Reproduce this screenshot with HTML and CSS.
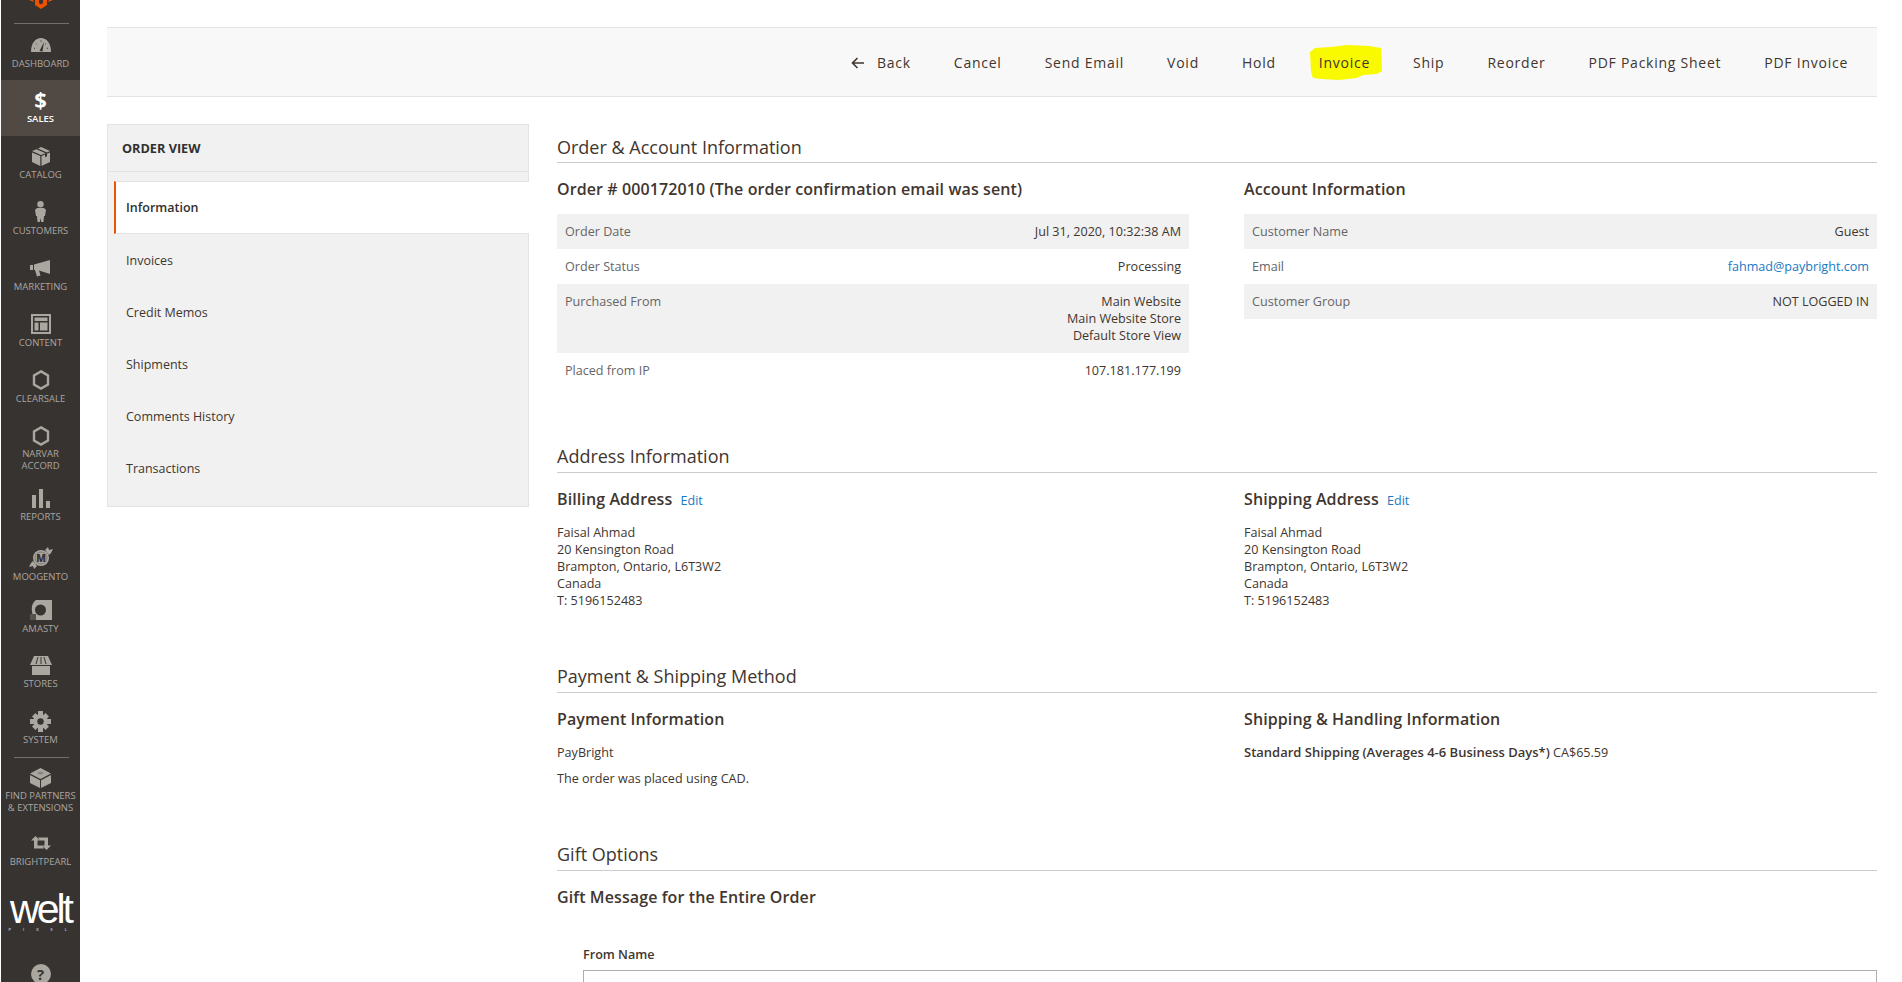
FILE: index.html
```html
<!DOCTYPE html>
<html>
<head>
    <meta name="viewport" content="width=device-width, initial-scale=1.0">
    <title>Order 000172010 / Orders / Sales / Magento Admin</title>
    <link rel="stylesheet" href="styles.css">
</head>
<body>
    <nav class="sidebar">
        <div class="logo">
            <svg width="32" height="10" viewBox="0 0 32 10"><path fill="#eb5202" fill-rule="evenodd" d="M10 0h12v5l-6 4-6-4zM14 0v3l2 1.500L18 3V0zM4 0h4l1 2zM28 0h-4l-1 2z"/></svg>
        </div>
        <a class="nav-item first">
            <span class="nav-icon"><svg width="20" height="14" viewBox="0 0 20 14"><path fill="#aaa6a0" d="M0 14C0 5 4.500 0 10 0s10 5 10 14z"/><path fill="#373330" d="M8.500 13l4.500-9-1.500 9.500z"/><path stroke="#373330" stroke-width="1" d="M3 10l1 .5M5 5.500l.8.8M10 2.500v1.200M15 5.500l-.8.8M17 10l-1 .5"/></svg></span>
            DASHBOARD
        </a>
        <a class="nav-item active">
            <span class="nav-icon dollar">$</span>
            SALES
        </a>
        <a class="nav-item">
            <span class="nav-icon"><svg width="18" height="19" viewBox="0 0 18 19"><path fill="#aaa6a0" d="M9 0l9 4-3 1.500-9-4zM4.500 2.200l9 4L9 8 0 4zM0 5.500l8.300 3.600V19L0 15zM18 5.500V15l-8.500 4V9.100l3.500-1.500v2.600l2-1V6.800z"/></svg></span>
            CATALOG
        </a>
        <a class="nav-item">
            <span class="nav-icon"><svg width="11" height="22" viewBox="0 0 11 22"><circle cx="5.500" cy="3.200" r="3.200" fill="#aaa6a0"/><path fill="#aaa6a0" d="M2 7h7l2 2-1 6H9l-.5 6H6.200l-.7-4-.7 4H2.500L2 15H1L0 9z"/></svg></span>
            CUSTOMERS
        </a>
        <a class="nav-item">
            <span class="nav-icon"><svg width="21" height="17" viewBox="0 0 21 17"><path fill="#aaa6a0" d="M0 5h3v5H0zM4 4.500L20 0v14L9 10.600l1.500 5-3.500 1L5 10H4z"/></svg></span>
            MARKETING
        </a>
        <a class="nav-item">
            <span class="nav-icon"><svg width="20" height="20" viewBox="0 0 20 20"><path fill="#aaa6a0" fill-rule="evenodd" d="M0 0h20v20H0zM2 2v16h16V2z"/><path fill="#aaa6a0" d="M3.500 3.500h13V7h-13zM3.500 8.500h4v8h-4zM9 8.500h7.500v8H9z"/></svg></span>
            CONTENT
        </a>
        <a class="nav-item short">
            <span class="nav-icon"><svg width="18" height="20" viewBox="0 0 18 20"><path fill="none" stroke="#aaa6a0" stroke-width="2.400" d="M9 1.400l7 4v9.200l-7 4-7-4V5.400z"/></svg></span>
            CLEARSALE
        </a>
        <a class="nav-item tall">
            <span class="nav-icon"><svg width="18" height="20" viewBox="0 0 18 20"><path fill="none" stroke="#aaa6a0" stroke-width="2.400" d="M9 1.400l7 4v9.200l-7 4-7-4V5.400z"/></svg></span>
            NARVAR<br>ACCORD
        </a>
        <a class="nav-item reports">
            <span class="nav-icon"><svg width="18" height="19" viewBox="0 0 18 19"><path fill="#aaa6a0" d="M0 6h4v13H0zM7 0h4v19H7zM14 12h4v7h-4z"/></svg></span>
            REPORTS
        </a>
        <a class="nav-item compact">
            <span class="nav-icon"><svg width="24" height="22" viewBox="0 0 24 22"><path fill="#aaa6a0" d="M16 3l3-3 1 3 4-1-2 4-2 2zM8 19l-3 3-1-3-4 1 2-4 2-2z"/><circle cx="12" cy="11" r="8" fill="#aaa6a0"/><circle cx="12" cy="11" r="6" fill="none" stroke="#7d7975" stroke-width="1"/><text class="moo-m" x="12" y="14.500" text-anchor="middle">M</text></svg></span>
            MOOGENTO
        </a>
        <a class="nav-item amasty">
            <span class="nav-icon"><svg width="22" height="21" viewBox="0 0 22 21"><path fill="#aaa6a0" d="M6 0h16v20H6l-3-4C1 9 1 4 6 0z"/><circle cx="10.500" cy="10" r="5.500" fill="#373330"/><path fill="#55524e" d="M0 14h6v6H0z"/></svg></span>
            AMASTY
        </a>
        <a class="nav-item">
            <span class="nav-icon"><svg width="22" height="19" viewBox="0 0 22 19"><path fill="#aaa6a0" d="M4 0h14l4 9H0zM2 10h18v9H2z"/><path stroke="#373330" stroke-width="1" d="M8 1L6 8M11 1v7M14 1l2 7"/></svg></span>
            STORES
        </a>
        <a class="nav-item">
            <span class="nav-icon"><svg width="21" height="21" viewBox="0 0 21 21"><circle cx="10.500" cy="10.500" r="5.200" fill="none" stroke="#aaa6a0" stroke-width="4"/><path fill="#aaa6a0" d="M8 0h5v4H8zM8 17h5v4H8zM0 8h4v5H0zM17 8h4v5h-4zM2 5.500L5.500 2l3 3L5 8.500zM15.500 2L19 5.500l-3 3L12.500 5zM2 15.500L5.500 19l3-3L5 12.500zM19 15.500L15.500 19l-3-3 3.500-3.500z"/></svg></span>
            SYSTEM
        </a>
        <div class="nav-divider"></div>
        <a class="nav-item partners">
            <span class="nav-icon"><svg width="21" height="20" viewBox="0 0 21 20"><path fill="#aaa6a0" d="M10.500 0L21 5.500 10.500 11 0 5.500zM0 7l10 5.200V20L0 15zM21 7l-10 5.200V20l10-5z"/><ellipse cx="10.500" cy="5" rx="3" ry="1.600" fill="#8a8681"/></svg></span>
            FIND PARTNERS<br>&amp; EXTENSIONS
        </a>
        <a class="nav-item compact">
            <span class="nav-icon"><svg width="20" height="14" viewBox="0 0 20 14"><path fill="#aaa6a0" d="M4.500 0L9 4.500H6.500V9.500H11l2 3H3V4.500H0zM15.500 14L11 9.500h2.500V4.500H9l-2-3h10v8h3z"/></svg></span>
            BRIGHTPEARL
        </a>
        <div class="welt">
            <span class="welt-name">welt</span>
            <span class="welt-sub">P I X E L</span>
        </div>
        <div class="help">?</div>
    </nav>

    <div class="content">
        <div class="toolbar">
            <a class="tool-btn back"><svg width="14" height="12" viewBox="0 0 14 12"><path fill="none" stroke="#41362f" stroke-width="1.600" d="M13 6H2M6.500 1L1.500 6l5 5"/></svg>Back</a>
            <a class="tool-btn">Cancel</a>
            <a class="tool-btn">Send Email</a>
            <a class="tool-btn">Void</a>
            <a class="tool-btn">Hold</a>
            <a class="tool-btn">
                <svg class="marker" width="74" height="36" viewBox="0 0 74 36"><path fill="#f9f900" d="M1 7L6 3l16-1 16-2 22 1 12 2 1 23-5 3-14 1-6 3-18 2-18-1-8-1-2-6z"/></svg>
                Invoice
            </a>
            <a class="tool-btn">Ship</a>
            <a class="tool-btn">Reorder</a>
            <a class="tool-btn">PDF Packing Sheet</a>
            <a class="tool-btn">PDF Invoice</a>
        </div>

        <div class="columns">
            <aside class="side-panel">
                <div class="side-title">ORDER VIEW</div>
                <ul class="side-menu">
                    <li class="selected">Information</li>
                    <li>Invoices</li>
                    <li>Credit Memos</li>
                    <li>Shipments</li>
                    <li>Comments History</li>
                    <li>Transactions</li>
                </ul>
            </aside>

            <main class="main">
                <section class="section">
                    <h2>Order &amp; Account Information</h2>
                    <div class="two-col">
                        <div>
                            <h3>Order # 000172010 (The order confirmation email was sent)</h3>
                            <table class="info">
                                <tr><th>Order Date</th><td>Jul 31, 2020, 10:32:38 AM</td></tr>
                                <tr><th>Order Status</th><td>Processing</td></tr>
                                <tr><th>Purchased From</th><td>Main Website<br>Main Website Store<br>Default Store View</td></tr>
                                <tr><th>Placed from IP</th><td>107.181.177.199</td></tr>
                            </table>
                        </div>
                        <div>
                            <h3>Account Information</h3>
                            <table class="info">
                                <tr><th>Customer Name</th><td>Guest</td></tr>
                                <tr><th>Email</th><td><a class="link">fahmad@paybright.com</a></td></tr>
                                <tr><th>Customer Group</th><td>NOT LOGGED IN</td></tr>
                            </table>
                        </div>
                    </div>
                </section>

                <section class="section">
                    <h2>Address Information</h2>
                    <div class="two-col">
                        <div>
                            <h3>Billing Address <a class="link edit">Edit</a></h3>
                            <address>Faisal Ahmad<br>20 Kensington Road<br>Brampton, Ontario, L6T3W2<br>Canada<br>T: 5196152483</address>
                        </div>
                        <div>
                            <h3>Shipping Address <a class="link edit">Edit</a></h3>
                            <address>Faisal Ahmad<br>20 Kensington Road<br>Brampton, Ontario, L6T3W2<br>Canada<br>T: 5196152483</address>
                        </div>
                    </div>
                </section>

                <section class="section">
                    <h2>Payment &amp; Shipping Method</h2>
                    <div class="two-col">
                        <div>
                            <h3>Payment Information</h3>
                            <p class="plain">PayBright</p>
                            <p class="plain">The order was placed using CAD.</p>
                        </div>
                        <div>
                            <h3>Shipping &amp; Handling Information</h3>
                            <p class="plain"><strong>Standard Shipping (Averages 4-6 Business Days*)</strong> CA$65.59</p>
                        </div>
                    </div>
                </section>

                <section class="section">
                    <h2>Gift Options</h2>
                    <h3>Gift Message for the Entire Order</h3>
                    <div class="gift-form">
                        <label class="gift-label">From Name</label>
                        <input class="gift-input" type="text" value="Guest">
                    </div>
                </section>
            </main>
        </div>
    </div>
</body>
</html>
```

FILE: styles.css
```css
html, body {
    height: 100%;
    margin: 0;
    overflow: hidden;
}
body {
    display: flex;
    background-color: white;
    color: #41362f;
    font-family: "Open Sans", "Noto Sans", sans-serif;
    font-size: 12px;
}
a {
    cursor: pointer;
}

/* left menu */
.sidebar {
    flex: none;
    width: 79px;
    margin-left: 1px;
    background-color: #373330;
    color: #aaa6a0;
    font-size: 9.5px;
    text-align: center;
}
.logo {
    height: 24px;
    display: flex;
    justify-content: center;
    align-items: flex-start;
    box-sizing: border-box;
    position: relative;
}
.logo::after, .nav-divider {
    content: "";
    display: block;
    height: 1px;
    background-color: #736e69;
}
.logo::after {
    position: absolute;
    left: 13px;
    right: 11px;
    bottom: 0;
}
.nav-divider {
    margin: 0 11px 0 13px;
}
.nav-item {
    display: block;
    height: 56px;
    box-sizing: border-box;
    padding-top: 8px;
    line-height: 13px;
}
.nav-item.first { padding-top: 9px; }
.nav-item.short { height: 55px; }
.nav-item.tall {
    height: 63px;
    padding-top: 9px;
    line-height: 12px;
}
.nav-item.reports { height: 60px; }
.nav-item.compact { height: 52px; }
.nav-item.amasty { height: 55px; }
.nav-item.partners {
    height: 65px;
    line-height: 12px;
}
.nav-item.active {
    background-color: #514943;
    color: white;
    font-weight: 600;
}
.nav-icon {
    display: flex;
    height: 24px;
    align-items: center;
    justify-content: center;
}
.dollar {
    height: 22px;
    margin-bottom: 2px;
    font-size: 22px;
    font-weight: 700;
    line-height: 22px;
}
.moo-m {
    font-size: 10px;
    font-weight: 800;
    fill: #373330;
}
.welt {
    height: 72px;
    color: white;
    display: flex;
    flex-direction: column;
    align-items: center;
}
.welt-name {
    font-family: "Liberation Sans", sans-serif;
    font-size: 41px;
    line-height: 34px;
    letter-spacing: -3px;
    margin-top: 17px;
}
.welt-sub {
    margin-top: 1px;
    font-size: 4px;
    letter-spacing: 5.5px;
    line-height: 6px;
}
.help {
    width: 20px;
    height: 20px;
    margin: 17px auto 0;
    border-radius: 50%;
    background-color: #aaa6a0;
    color: #373330;
    font-size: 15px;
    font-weight: 700;
    line-height: 20px;
}

/* page */
.content {
    flex: 1;
    min-width: 0;
    padding: 27px 25px 0 27px;
}
.toolbar {
    display: flex;
    justify-content: flex-end;
    align-items: center;
    gap: 43px;
    height: 70px;
    box-sizing: border-box;
    padding: 2px 29px 0 0;
    background-color: #f8f8f8;
    border-top: 1px solid #e3e3e3;
    border-bottom: 1px solid #e3e3e3;
    isolation: isolate;
}
.tool-btn {
    position: relative;
    font-size: 14px;
    font-weight: 500;
    letter-spacing: .75px;
    line-height: 20px;
    color: #41362f;
}
.back {
    display: flex;
    align-items: center;
    gap: 12px;
}
.marker {
    position: absolute;
    left: -10px;
    top: -8px;
    z-index: -1;
}
.columns {
    display: flex;
    gap: 28px;
    margin-top: 27px;
}

/* order view menu */
.side-panel {
    flex: none;
    width: 422px;
    box-sizing: border-box;
    height: 383px;
    background-color: #f1f1f1;
    border: 1px solid #e3e3e3;
}
.side-title {
    height: 47px;
    box-sizing: border-box;
    padding-left: 14px;
    border-bottom: 1px solid #e3e3e3;
    font-size: 12.7px;
    font-weight: 700;
    line-height: 46px;
    color: #303030;
}
.side-menu {
    list-style: none;
    margin: 9px 0 0;
    padding: 0;
    font-size: 12.5px;
}
.side-menu li {
    height: 52px;
    padding-left: 18px;
    line-height: 52px;
}
.side-menu .selected {
    height: 53px;
    box-sizing: border-box;
    margin-left: 6px;
    margin-right: -1px;
    margin-bottom: 1px;
    padding-left: 10px;
    background-color: white;
    border-left: 2px solid #eb5202;
    border-top: 1px solid #e3e3e3;
    border-bottom: 1px solid #e3e3e3;
    font-weight: 600;
    line-height: 52px;
    color: #303030;
}

/* order sections */
.main {
    flex: 1;
    min-width: 0;
    padding-top: 11px;
}
.section {
    margin-bottom: 56px;
}
.section + .section {
    margin-bottom: 55px;
}
h2 {
    margin: 0;
    padding-bottom: 3px;
    border-bottom: 1px solid #cccccc;
    font-size: 18px;
    font-weight: 400;
    line-height: 24px;
}
.section + .section h2 {
    padding-bottom: 4px;
}
h3 {
    margin: 16px 0 15px;
    font-size: 16px;
    font-weight: 600;
    letter-spacing: .1px;
    line-height: 20px;
}
.two-col {
    display: grid;
    grid-template-columns: 632px 633px;
    gap: 55px;
}
.info {
    width: 100%;
    border-collapse: collapse;
    font-size: 12.6px;
    line-height: 17px;
}
.info th, .info td {
    padding: 9px 8px;
    vertical-align: top;
}
.info th {
    font-weight: 400;
    text-align: left;
    color: #666666;
}
.info td {
    text-align: right;
}
.info tr:nth-child(odd) {
    background-color: #f1f1f1;
}
.link {
    color: #1979c3;
}
.edit {
    margin-left: 4px;
    font-size: 12.5px;
    font-weight: 400;
    letter-spacing: 0;
    line-height: 1;
}
address {
    font-size: 12.6px;
    font-style: normal;
    line-height: 17px;
}
.plain {
    margin: 0 0 9px;
    font-size: 12.6px;
    line-height: 17px;
}
.plain:last-child {
    margin-bottom: 0;
}
.plain strong {
    font-size: 13px;
    font-weight: 600;
    line-height: 1;
}
.gift-form {
    margin: 39px 0 0 26px;
}
.gift-label {
    display: block;
    margin-bottom: 7px;
    font-size: 12.6px;
    font-weight: 600;
    line-height: 17px;
}
.gift-input {
    display: block;
    width: 100%;
    height: 33px;
    box-sizing: border-box;
    padding: 0 10px;
    border: 1px solid #adadad;
    font-family: inherit;
    font-size: 12.6px;
    color: #41362f;
}
```
